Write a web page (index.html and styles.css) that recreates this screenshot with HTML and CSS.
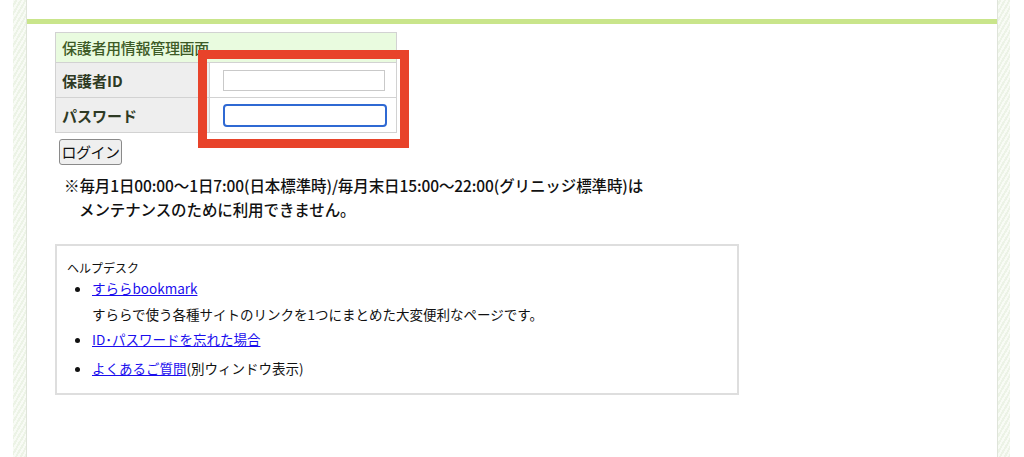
FILE: index.html
```html
<!DOCTYPE html>
<html lang="ja">

<head>
    <meta charset="UTF-8">
    <meta name="viewport" content="width=device-width, initial-scale=1.0">
    <title>保護者用情報管理画面</title>
    <link rel="stylesheet" href="styles.css">
</head>

<body>
    <div id="page">
        <div class="stripe stripe-l"></div>
        <div id="main">
            <div class="topline"></div>
            <div class="content">
                <table class="login">
                    <tr>
                        <th colspan="2">保護者用情報管理画面</th>
                    </tr>
                    <tr>
                        <td class="label">保護者ID</td>
                        <td class="field"><input type="text" class="txt"></td>
                    </tr>
                    <tr>
                        <td class="label">パスワード</td>
                        <td class="field"><input type="password" class="txt focus"></td>
                    </tr>
                </table>
                <button class="btn">ログイン</button>
                <p class="note">※毎月1日00:00～1日7:00(日本標準時)/毎月末日15:00～22:00(グリニッジ標準時)は<br>メンテナンスのために利用できません。</p>

                <div class="help">
                    <p class="help-title">ヘルプデスク</p>
                    <ul>
                        <li>
                            <a href="#">すららbookmark</a>
                            <p class="desc">すららで使う各種サイトのリンクを1つにまとめた大変便利なページです。</p>
                        </li>
                        <li><a href="#">ID･パスワードを忘れた場合</a></li>
                        <li class="last"><a href="#">よくあるご質問</a>(別ウィンドウ表示)</li>
                    </ul>
                </div>
            </div>
        </div>
        <div class="stripe stripe-r"></div>
    </div>
    <!-- 注目枠 -->
    <div class="mark"></div>
</body>

</html>
```

FILE: styles.css
```css
* {
    margin: 0;
    padding: 0;
}

body {
    background: #fff;
    font-family: "Noto Sans CJK JP", "Liberation Sans", sans-serif;
    color: #111;
}

#page {
    display: flex;
    margin-left: 13px;
    height: 457px;
}

.stripe {
    width: 14px;
    background: repeating-linear-gradient(120deg, #f8fbf5 0 2px, #ecf3e6 2px 4px);
}

.stripe-l {
    box-shadow: inset -1px 0 0 #dfe4da;
}

.stripe-r {
    width: 13px;
    box-shadow: inset 1px 0 0 #dfe4da;
}

#main {
    width: 970px;
    padding-top: 19px;
}

.topline {
    height: 5px;
    background: #c9e58b;
}

.content {
    padding: 8px 0 0 28px;
}

table.login {
    border-collapse: collapse;
    width: 342px;
    border: 1px solid #d2d2d2;
    font-size: 15px;
}

table.login th {
    height: 30px;
    box-sizing: border-box;
    text-align: left;
    padding: 0 6px;
    background: #e9fbdf;
    color: #3d5a26;
    font-weight: 500;
    letter-spacing: -0.3px;
    border-bottom: 1px solid #d2d2d2;
}

table.login td {
    height: 34px;
    border-bottom: 1px solid #d2d2d2;
}

td.label {
    width: 147px;
    padding-left: 6px;
    background: #eeeeee;
    color: #2e3a24;
    font-weight: bold;
    border-right: 1px solid #d2d2d2;
}

td.field {
    background: #fff;
    padding-left: 13px;
}

.txt {
    display: block;
    width: 160px;
    height: 19px;
    border: 1px solid #c9c9c9;
    outline: none;
}

.txt.focus {
    border: 2px solid #2f69d3;
    border-radius: 4px;
}

.btn {
    display: block;
    margin: 6px 0 0 4px;
    width: 63px;
    height: 26px;
    padding: 0;
    white-space: nowrap;
    font-family: "Noto Sans CJK JP", sans-serif;
    font-size: 15px;
    line-height: 20px;
    letter-spacing: -0.5px;
    color: #111;
    background: #efefef;
    border: 1px solid #8a8a8a;
    border-radius: 3px;
}

.note {
    margin: 8px 0 0 9px;
    padding-left: 15px;
    text-indent: -15px;
    font-size: 15.5px;
    line-height: 24px;
    font-weight: 500;
    letter-spacing: -0.1px;
}

.help {
    margin-top: 23px;
    width: 684px;
    height: 151px;
    border: 2px solid #dedede;
    padding-left: 10px;
    box-sizing: border-box;
}

.help-title {
    margin-top: 14px;
    font-size: 12px;
    line-height: 16px;
}

.help ul {
    margin-left: 25px;
    font-size: 13.5px;
}

.help li {
    line-height: 22px;
    margin-top: 3px;
}

.help li:first-child {
    margin-top: 1px;
}

.help li .desc {
    margin-top: 4px;
    line-height: 22px;
}

.help li.last {
    margin-top: 7px;
}

.help a {
    color: #1a0dee;
}

.mark {
    position: absolute;
    left: 198px;
    top: 50px;
    width: 193px;
    height: 80px;
    border: 9px solid #e8432a;
}
```
